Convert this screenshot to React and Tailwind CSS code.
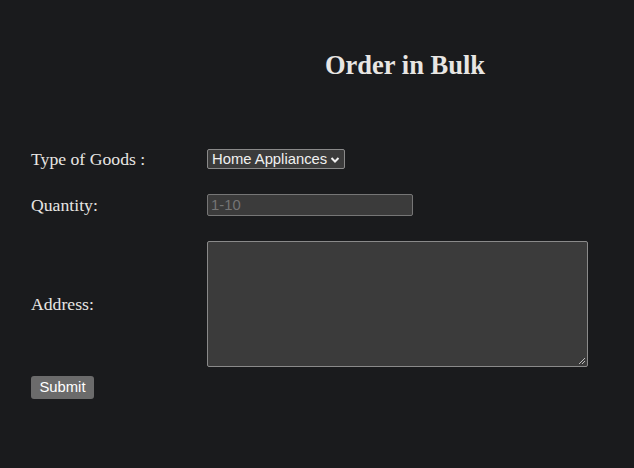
export default function App() {
  return (
    <div className="min-h-[468px] w-full bg-[#1a1b1d] text-[#e8e6e3] font-['Liberation_Serif',serif]">
      <div className="pt-[48px] pl-[325px]">
        <h1 className="text-[26.5px] font-bold leading-[34px]">Order in Bulk</h1>
      </div>
      <div className="pl-[31px] pt-[67px]">
        <div className="grid grid-cols-[176px_auto] items-center gap-y-[25px]">
          <div className="text-[17.7px] leading-[20px]">Type of Goods :</div>
          <div className="flex">
            <div className="flex h-[20px] w-[138px] items-center justify-between rounded-[2px] border border-[#8a8a8a] bg-[#3b3b3b] pl-[4px] pr-[4px] font-['Liberation_Sans',sans-serif] text-[14.8px] text-[#f0f0f0]">
              <span>Home Appliances</span>
              <svg width="10" height="10" viewBox="0 0 10 10" className="mt-[1px]">
                <path d="M1.5 3 L5 6.5 L8.5 3" stroke="#f0f0f0" strokeWidth="2" fill="none" />
              </svg>
            </div>
          </div>
          <div className="text-[17.7px] leading-[20px]">Quantity:</div>
          <div className="flex">
            <div className="flex h-[22px] w-[206px] items-center rounded-[2px] border border-[#767676] bg-[#3b3b3b] pl-[3px] font-['Liberation_Sans',sans-serif] text-[14.8px] text-[#757575]">
              1-10
            </div>
          </div>
          <div className="text-[17.7px] leading-[20px]">Address:</div>
          <div className="relative h-[126px] w-[381px] rounded-[2px] border border-[#8a8a8a] bg-[#3b3b3b]">
            <svg width="8" height="8" viewBox="0 0 8 8" className="absolute bottom-[1px] right-[1px]">
              <path d="M7 1 L1 7 M7 4 L4 7" stroke="#bbbbbb" strokeWidth="1" />
            </svg>
          </div>
        </div>
        <div className="mt-[9px] flex">
          <div className="flex h-[23px] w-[63px] items-center justify-center rounded-[3px] bg-[#6b6b6b] font-['Liberation_Sans',sans-serif] text-[14.8px] text-white">
            Submit
          </div>
        </div>
      </div>
    </div>
  );
}
